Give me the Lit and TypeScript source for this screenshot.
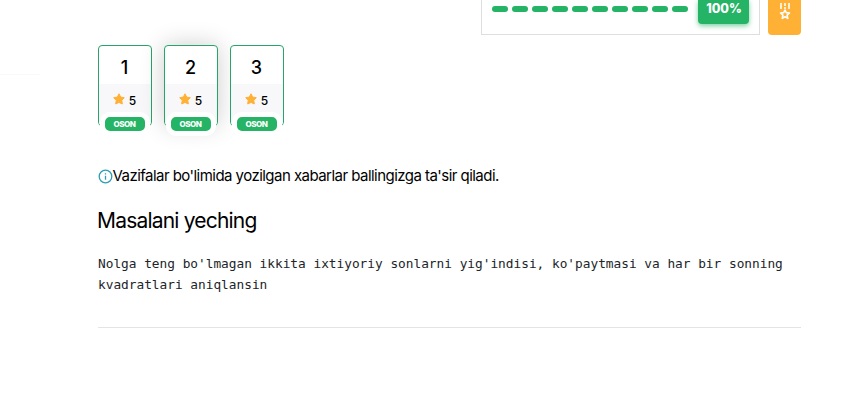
import { LitElement, html, css } from "lit";
import { customElement } from "lit/decorators.js";

@customElement("app-root")
export class AppRoot extends LitElement {
  static styles = css`
    :host { display: block; height: 400px; overflow: hidden; background: #fff; color: #000; font-family: Inter, "Open Sans", sans-serif; }
    * { box-sizing: border-box; }
    .layout { display: grid; grid-template-columns: 40px 703px; column-gap: 58px; height: 400px; }
    .side { height: 75px; border-bottom: 1px solid #f9f9f9; }
    .top { display: flex; justify-content: flex-end; gap: 8px; height: 35px; }
    .progress { width: 279px; height: 35px; border: 1px solid #dedede; border-top: 0; display: flex; align-items: flex-start; padding-left: 10px; }
    .dashes { display: flex; gap: 4px; padding-top: 6px; width: 206px; }
    .dash { width: 16px; height: 6px; border-radius: 3px; background: #25b365; }
    .percent { width: 51px; height: 24px; border-radius: 0 0 4px 4px; background: #25b365; box-shadow: 0 2px 5px #25b36599; color: #fff; font: 800 12.5px/18px Inter, sans-serif; text-align: center; padding-left: 1px; }
    .medal { width: 33px; height: 35px; border-radius: 0 0 4px 4px; background: #ffb136; display: flex; justify-content: center; padding-top: 2px; }
    .cards { display: flex; gap: 12px; margin-top: 10px; height: 86px; }
    .card { position: relative; width: 54px; height: 81px; border: 1px solid #25a56a; border-radius: 4px; background: #fff; }
    .card.active { box-shadow: 0 0 24px rgba(0, 0, 0, .2); }
    .number { height: 38px; padding-right: 1px; text-align: center; font: 500 18px/43px Inter, sans-serif; }
    .score { height: 41px; background: #f8f8fa; border-radius: 0 0 3px 3px; display: flex; justify-content: center; gap: 4px; padding: 6px 1px 0 0; font: 500 12px/21px Inter, sans-serif; }
    .score svg { margin-top: 3px; }
    .level { position: absolute; left: 1px; top: 66px; width: 50px; height: 24px; border: 5px solid #fff; border-radius: 10px; background: #25b365; color: #fff; font: 800 8px/14px Inter, sans-serif; letter-spacing: -.4px; text-align: center; padding-right: 1px; }
    .notice { display: flex; align-items: center; height: 20px; margin-top: 34px; font-size: 15px; letter-spacing: -.54px; white-space: nowrap; }
    .notice svg { margin: 2px 0 0 -.5px; }
    h2 { margin: 21px 0 0 -1px; font: 400 21px/30px Inter, sans-serif; letter-spacing: -.8px; }
    pre { margin: 17px 0 0; font: 12.8px/21px "DejaVu Sans Mono", monospace; letter-spacing: -.01px; color: #212529; white-space: pre-wrap; }
    .rule { margin-top: 32px; height: 1px; background: #e4e4e4; }
    svg { flex: none; display: block; }
  `;

  private card(n: number) {
    return html`<div class="card ${n === 2 ? "active" : ""}">
      <div class="number">${n}</div>
      <div class="score">
        <svg width="12" height="12" viewBox="0 0 12 12"><path d="M6 .8 7.7 4.1 11.3 4.7 8.8 7.3 9.3 11 6 9.4 2.7 11 3.2 7.3.7 4.7 4.3 4.1Z" fill="#ffb136" stroke="#ffb136" stroke-linejoin="round"/></svg>
        <span>5</span>
      </div>
      <div class="level">OSON</div>
    </div>`;
  }

  render() {
    return html`<div class="layout">
      <div class="side"></div>
      <main>
        <div class="top">
          <div class="progress">
            <div class="dashes">${Array.from({ length: 10 }, () => html`<i class="dash"></i>`)}</div>
            <div class="percent">100%</div>
          </div>
          <div class="medal">
            <svg width="12" height="18" viewBox="0 0 12 18" fill="none" stroke="#fff" stroke-width="1.6"><path d="M2 1v6M6 1v3M6 5v2M10 1v6"/><path d="m6 8 1.3 2.6 3.2.4-2.4 2.2.7 3.2L6 14.8l-2.8 1.6.7-3.2L1.5 11l3.2-.4Z" stroke-linejoin="round"/></svg>
          </div>
        </div>
        <div class="cards">${[1, 2, 3].map((n) => this.card(n))}</div>
        <div class="notice">
          <svg width="15" height="15" viewBox="0 0 15 15" fill="none" stroke="#2b9eb3" stroke-width="1.3"><circle cx="7.5" cy="7.5" r="6.3"/><path d="M7.5 6.7v4M7.5 4.3v1.3"/></svg>
          <span>Vazifalar bo'limida yozilgan xabarlar ballingizga ta'sir qiladi.</span>
        </div>
        <h2>Masalani yeching</h2>
        <pre>Nolga teng bo'lmagan ikkita ixtiyoriy sonlarni yig'indisi, ko'paytmasi va har bir sonning kvadratlari aniqlansin</pre>
        <div class="rule"></div>
      </main>
    </div>`;
  }
}
